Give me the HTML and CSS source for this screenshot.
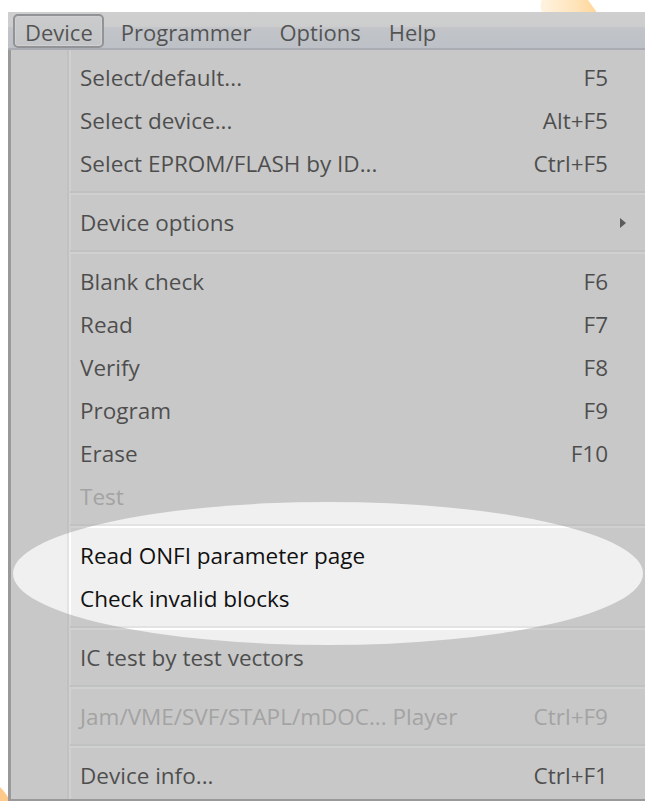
FILE: index.html
```html
<!DOCTYPE html>
<html lang="en">
<head>
<meta charset="utf-8">
<title>Device menu</title>
<link rel="stylesheet" href="styles.css">
</head>
<body>
<div class="stage">
  <!-- watermark fragments peeking out behind the window -->
  <svg class="mark mark-top" width="70" height="14" viewBox="0 0 70 14">
    <defs>
      <linearGradient id="mt" x1="0" x2="1" y1="0" y2="0">
        <stop offset="0" stop-color="#fff3e0"/>
        <stop offset="0.6" stop-color="#ffe4bb"/>
        <stop offset="1" stop-color="#ffd596"/>
      </linearGradient>
    </defs>
    <path d="M10 0 C8 4 8 9 11 14 L66 14 L56 0 Z" fill="url(#mt)"/>
  </svg>
  <svg class="mark mark-corner" width="10" height="18" viewBox="0 0 10 18">
    <path d="M0 4 C4 8 7 12 10 18 L0 18 Z" fill="#ffc98a"/>
  </svg>

  <div class="window">
    <nav class="menubar">
      <span class="menubar-item is-open">Device</span>
      <span class="menubar-item">Programmer</span>
      <span class="menubar-item">Options</span>
      <span class="menubar-item">Help</span>
    </nav>

    <ul class="menu">
      <li class="item"><span>Select/default...</span><span class="key">F5</span></li>
      <li class="item"><span>Select device...</span><span class="key">Alt+F5</span></li>
      <li class="item"><span>Select EPROM/FLASH by ID...</span><span class="key">Ctrl+F5</span></li>
      <li class="sep"></li>
      <li class="item has-sub"><span>Device options</span><span class="arrow"></span></li>
      <li class="sep"></li>
      <li class="item"><span>Blank check</span><span class="key">F6</span></li>
      <li class="item"><span>Read</span><span class="key">F7</span></li>
      <li class="item"><span>Verify</span><span class="key">F8</span></li>
      <li class="item"><span>Program</span><span class="key">F9</span></li>
      <li class="item"><span>Erase</span><span class="key">F10</span></li>
      <li class="item is-disabled"><span>Test</span></li>
      <li class="sep"></li>
      <li class="item"><span>Read ONFI parameter page</span></li>
      <li class="item"><span>Check invalid blocks</span></li>
      <li class="sep"></li>
      <li class="item"><span>IC test by test vectors</span></li>
      <li class="sep"></li>
      <li class="item is-disabled"><span>Jam/VME/SVF/STAPL/mDOC... Player</span><span class="key">Ctrl+F9</span></li>
      <li class="sep"></li>
      <li class="item"><span>Device info...</span><span class="key">Ctrl+F1</span></li>
    </ul>

    <!-- dims everything except an elliptical spotlight -->
    <div class="spotlight"></div>
  </div>
</div>
</body>
</html>
```

FILE: styles.css
```css
html, body {
  margin: 0;
  padding: 0;
  background: #ffffff;
}

body {
  width: 645px;
  height: 801px;
  overflow: hidden;
  font-family: "Open Sans", "Noto Sans", sans-serif;
  color: #111111;
}

.stage {
  position: relative;
  width: 645px;
  height: 801px;
  overflow: hidden;
}

.mark {
  position: absolute;
  display: block;
}

.mark-top {
  left: 532px;
  top: 0;
}

.mark-corner {
  left: 0;
  top: 783px;
}

/* application window, clipped at the right and bottom edges */
.window {
  position: relative;
  margin: 12px 0 0 8px;
  width: 637px;
  height: 789px;
  overflow: hidden;
}

/* ---------- menu bar ---------- */
.menubar {
  display: flex;
  gap: 5px;
  padding: 2px 0 0 5px;
  box-sizing: border-box;
  height: 38px;
  background: linear-gradient(#fdfdfd 0, #f9fafb 40%, #e4e9f1 44%, #dde4ee 100%);
  border-bottom: 2px solid #b8bec8;
}

.menubar-item {
  height: 34px;
  line-height: 33px;
  padding: 0 9px 0 10px;
  border: 2px solid transparent;
  border-radius: 5px;
  box-sizing: border-box;
  font-size: 22px;
  color: #1a1a1a;
  white-space: nowrap;
}

.menubar-item.is-open {
  border-color: #8c9097;
  background: linear-gradient(#f6f7f8, #e8ebef);
  box-shadow: inset 0 0 0 1px #ffffff;
}

/* ---------- drop-down ---------- */
.menu {
  list-style: none;
  margin: 0;
  padding: 6px 0 2px 0;
  border-left: 3px solid #9c9c9c;
  box-shadow: inset 1px 0 0 #f4f4f4;
  background:
    linear-gradient(90deg,
      transparent 56px,
      #e2e3e3 56px, #e2e3e3 58px,
      #ffffff 58px, #ffffff 60px,
      transparent 60px),
    #f0f0f0;
  border-bottom: 2px solid #9c9c9c;
}

.item {
  display: flex;
  align-items: center;
  justify-content: space-between;
  height: 43px;
  padding: 0 37px 0 69px;
  font-size: 22.5px;
  color: #111111;
  white-space: nowrap;
}

.item.has-sub {
  padding-right: 19px;
}

.item.is-disabled {
  color: #adadad;
}

.key {
  text-align: right;
}

.arrow {
  width: 0;
  height: 0;
  border-left: 6px solid #2a2a2a;
  border-top: 5px solid transparent;
  border-bottom: 5px solid transparent;
}

.sep {
  height: 16px;
  margin-left: 59px;
  background: linear-gradient(
    transparent 6px,
    #e2e3e3 6px, #e2e3e3 8px,
    #ffffff 8px, #ffffff 10px,
    transparent 10px);
}

/* ---------- spotlight ---------- */
.spotlight {
  position: absolute;
  left: 5px;
  top: 490px;
  width: 630px;
  height: 143px;
  border-radius: 50%;
  box-shadow: 0 0 1.5px 1600px rgba(150, 150, 150, 0.45);
  pointer-events: none;
}
```
